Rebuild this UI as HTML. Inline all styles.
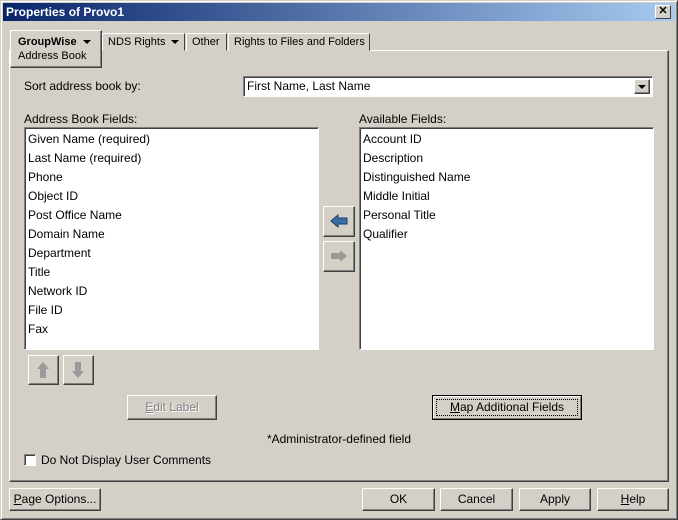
<!DOCTYPE html>
<html><head><style>
*{box-sizing:border-box;margin:0;padding:0}
body{width:678px;height:520px;background:#d4d0c8;font-family:"Liberation Sans",sans-serif;font-size:12px;color:#000;position:relative;overflow:hidden}
.win{position:absolute;left:0;top:0;width:678px;height:520px;border:1px solid;border-color:#d4d0c8 #404040 #404040 #d4d0c8;box-shadow:inset 1px 1px #fff,inset -1px -1px #808080}
.title{position:absolute;left:3px;top:3px;width:672px;height:18px;background:linear-gradient(90deg,#0a246a,#a6caf0);color:#fff;font-weight:bold;font-size:12px;line-height:18px;padding-left:3px}
.close{position:absolute;right:4px;top:2px;width:16px;height:14px;background:#d4d0c8;border:1px solid;border-color:#fff #404040 #404040 #fff;color:#000;font-size:11px;line-height:11px;text-align:center;font-weight:bold}
.a{position:absolute;white-space:nowrap}
.raised{background:#d4d0c8;border:1px solid;border-color:#fff #404040 #404040 #fff;box-shadow:inset -1px -1px #808080}
.sunk{background:#fff;border:1px solid;border-color:#808080 #fff #fff #808080;box-shadow:inset 1px 1px #404040}
.btn{text-align:center;line-height:20px}
.tab{position:absolute;top:33px;height:18px;border:1px solid;border-color:#fff #404040 transparent #fff;line-height:16px;padding-left:5px;background:#d4d0c8;white-space:nowrap;font-size:11px;overflow:hidden}
.list div{height:19px;line-height:19px;padding-left:3px}
.tri{display:inline-block;width:0;height:0;border-left:4px solid transparent;border-right:4px solid transparent;border-top:4px solid #000;vertical-align:middle;margin-left:6px}
.dis{color:#808080;text-shadow:1px 1px #fff}
</style></head><body>
<div class="win"></div>
<div class="title">Properties of Provo1<div class="close">✕</div></div>
<div class="a" style="left:9px;top:50px;width:660px;height:432px;border:1px solid;border-color:#fff #404040 #404040 #fff;box-shadow:inset -1px -1px #808080"></div>
<div class="tab" style="left:102px;width:83px">NDS Rights<span class="tri"></span></div>
<div class="tab" style="left:186px;width:41px">Other</div>
<div class="tab" style="left:228px;width:142px">Rights to Files and Folders</div>
<div class="a" style="left:10px;top:30px;width:92px;height:38px;background:#d4d0c8;border:1px solid;border-color:#fff #404040 #404040 #fff;box-shadow:inset -1px -1px #808080;padding:4px 0 0 7px;line-height:14px;font-size:11px"><b>GroupWise</b><span class="tri"></span><br>Address Book</div>
<div class="a" style="left:24px;top:79px">Sort address book by:</div>
<div class="a sunk" style="left:243px;top:76px;width:410px;height:21px;padding:2px 3px;line-height:15px">First Name, Last Name
<div class="a raised" style="right:2px;top:2px;width:16px;height:15px"><span class="tri" style="position:absolute;left:-3px;top:5px"></span></div></div>
<div class="a" style="left:24px;top:112px">Address Book Fields:</div>
<div class="a" style="left:359px;top:112px">Available Fields:</div>
<div class="a sunk list" style="left:24px;top:127px;width:295px;height:223px;padding-top:2px">
<div>Given Name (required)</div><div>Last Name (required)</div><div>Phone</div><div>Object ID</div><div>Post Office Name</div><div>Domain Name</div><div>Department</div><div>Title</div><div>Network ID</div><div>File ID</div><div>Fax</div></div>
<div class="a sunk list" style="left:359px;top:127px;width:295px;height:223px;padding-top:2px">
<div>Account ID</div><div>Description</div><div>Distinguished Name</div><div>Middle Initial</div><div>Personal Title</div><div>Qualifier</div></div>
<div class="a raised" style="left:323px;top:206px;width:32px;height:31px"><svg width="30" height="29"><path d="M7 14 L14 8 L14 11 L23 11 L23 17 L14 17 L14 20 Z" fill="#3a6ea5" stroke="#1c3d6e"/></svg></div>
<div class="a raised" style="left:323px;top:241px;width:32px;height:31px"><svg width="30" height="29"><path d="M23 14 L16 8 L16 11 L7 11 L7 17 L16 17 L16 20 Z" fill="#9a9a9a"/></svg></div>
<div class="a raised" style="left:28px;top:355px;width:31px;height:30px"><svg width="29" height="28"><path d="M14 6 L20 13 L17 13 L17 22 L11 22 L11 13 L8 13 Z" fill="#9a9a9a"/></svg></div>
<div class="a raised" style="left:63px;top:355px;width:31px;height:30px"><svg width="29" height="28"><path d="M14 22 L20 15 L17 15 L17 6 L11 6 L11 15 L8 15 Z" fill="#9a9a9a"/></svg></div>
<div class="a raised btn dis" style="left:127px;top:395px;width:90px;height:25px;line-height:23px"><u>E</u>dit Label</div>
<div class="a btn" style="left:432px;top:395px;width:150px;height:25px;border:1px solid #000;background:#d4d0c8"><div style="border:1px solid;border-color:#fff #808080 #808080 #fff;height:23px;padding:2px"><div style="border:1px dotted #000;height:17px;line-height:15px"><u>M</u>ap Additional Fields</div></div></div>
<div class="a" style="left:0;width:678px;top:432px;text-align:center">*Administrator-defined field</div>
<div class="a sunk" style="left:24px;top:454px;width:12px;height:12px"></div>
<div class="a" style="left:41px;top:453px">Do Not Display User Comments</div>
<div class="a raised btn" style="left:9px;top:488px;width:92px;height:23px"><u>P</u>age Options...</div>
<div class="a raised btn" style="left:362px;top:488px;width:73px;height:23px">OK</div>
<div class="a raised btn" style="left:440px;top:488px;width:73px;height:23px">Cancel</div>
<div class="a raised btn" style="left:519px;top:488px;width:72px;height:23px">Apply</div>
<div class="a raised btn" style="left:597px;top:488px;width:72px;height:23px"><u>H</u>elp</div>
</body></html>
